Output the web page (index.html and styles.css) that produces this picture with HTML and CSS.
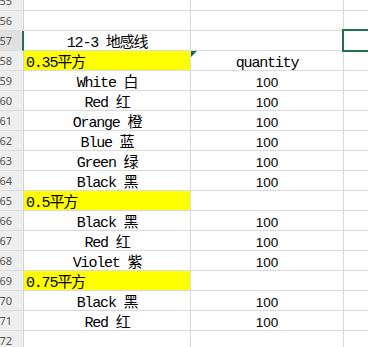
FILE: index.html
```html
<!DOCTYPE html>
<html>
<head>
<meta charset="utf-8">
<link rel="stylesheet" href="styles.css">
</head>
<body>
<div class="viewport">
  <div class="sheet">
    <div class="rh">55</div><div class="c"></div><div class="c"></div><div class="c"></div>
    <div class="rh">56</div><div class="c"></div><div class="c"></div><div class="c"></div>
    <div class="rh active">57</div><div class="c mid">12-3 地感线</div><div class="c"></div><div class="c sel"><div class="selbox"></div></div>
    <div class="rh">58</div><div class="c yellow">0.35平方</div><div class="c mid"><span class="flag"></span>quantity</div><div class="c"></div>
    <div class="rh">59</div><div class="c mid">White 白</div><div class="c num">100</div><div class="c"></div>
    <div class="rh">60</div><div class="c mid">Red 红</div><div class="c num">100</div><div class="c"></div>
    <div class="rh">61</div><div class="c mid">Orange 橙</div><div class="c num">100</div><div class="c"></div>
    <div class="rh">62</div><div class="c mid">Blue 蓝</div><div class="c num">100</div><div class="c"></div>
    <div class="rh">63</div><div class="c mid">Green 绿</div><div class="c num">100</div><div class="c"></div>
    <div class="rh">64</div><div class="c mid">Black 黑</div><div class="c num">100</div><div class="c"></div>
    <div class="rh">65</div><div class="c yellow">0.5平方</div><div class="c"></div><div class="c"></div>
    <div class="rh">66</div><div class="c mid">Black 黑</div><div class="c num">100</div><div class="c"></div>
    <div class="rh">67</div><div class="c mid">Red 红</div><div class="c num">100</div><div class="c"></div>
    <div class="rh">68</div><div class="c mid">Violet 紫</div><div class="c num">100</div><div class="c"></div>
    <div class="rh">69</div><div class="c yellow">0.75平方</div><div class="c"></div><div class="c"></div>
    <div class="rh">70</div><div class="c mid">Black 黑</div><div class="c num">100</div><div class="c"></div>
    <div class="rh">71</div><div class="c mid">Red 红</div><div class="c num">100</div><div class="c"></div>
    <div class="rh">72</div><div class="c"></div><div class="c"></div><div class="c"></div>
  </div>
</div>
</body>
</html>
```
FILE: styles.css
```css
html, body {
  margin: 0;
  padding: 0;
  background: #ffffff;
}
.viewport {
  width: 368px;
  height: 347px;
  overflow: hidden;
}
.sheet {
  margin-top: -9px;
  display: grid;
  grid-template-columns: 24px 167px 153px 40px;
  grid-auto-rows: 20px;
  font-family: "Liberation Mono", "Noto Sans CJK SC", monospace;
  font-size: 15px;
  letter-spacing: -1.2px;
  color: #000;
}
.rh {
  background: #eeeeee;
  border-right: 1px solid #d2d2d2;
  border-bottom: 1px solid #dcdcdc;
  font-family: "Noto Sans", sans-serif;
  font-size: 11px;
  letter-spacing: 0;
  color: #555;
  display: flex;
  align-items: center;
  justify-content: flex-end;
  padding-right: 11px;
  overflow: hidden;
  white-space: nowrap;
}
.rh.active {
  background: #e0e0e0;
  border-right: 2px solid #217346;
  padding-right: 10px;
}
.c {
  position: relative;
  border-right: 1px solid #dadada;
  border-bottom: 1px solid #dadada;
  display: flex;
  align-items: flex-end;
  line-height: 13px;
  padding: 0 2px;
  white-space: nowrap;
  overflow: visible;
}
.mid {
  justify-content: center;
}
.yellow {
  background: #ffff00;
}
.num {
  justify-content: center;
  font-family: "Liberation Sans", sans-serif;
  font-size: 13.5px;
  letter-spacing: 0;
  padding-bottom: 1px;
}
.flag {
  position: absolute;
  left: 0;
  top: 0;
  width: 0;
  height: 0;
  border-top: 6px solid #1f6e43;
  border-right: 6px solid transparent;
}
.sel {
  z-index: 2;
}
.selbox {
  position: absolute;
  left: -2px;
  top: -2px;
  right: -2px;
  bottom: -2px;
  border: 2px solid #217346;
}
```
